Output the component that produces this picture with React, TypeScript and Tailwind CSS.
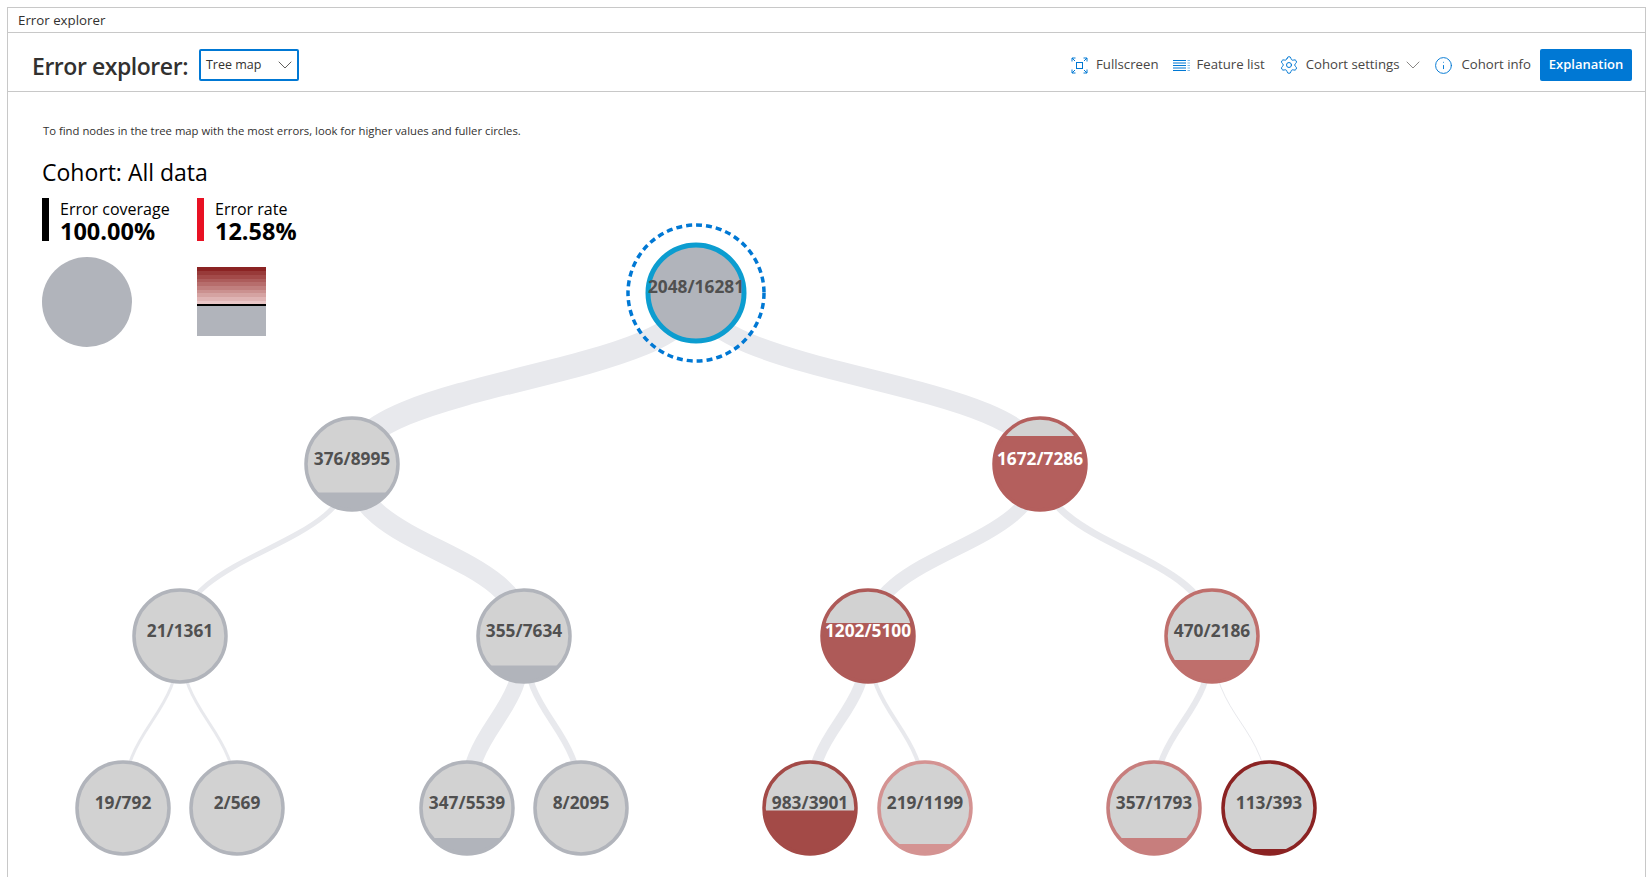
import type { ReactNode } from 'react'
import { ChevronDown, Info, Settings } from 'lucide-react'

const FONT = "'Open Sans', 'Noto Sans', sans-serif"

type TreeNode = {
  id: string
  x: number
  y: number
  label: string
  link: number
  fillTop: number
  fill: string
  textWhite?: boolean
  parent?: string
}

const GREY = '#b1b4bb'

const NODES: TreeNode[] = [
  { id: 'root', x: 696, y: 293, label: '2048/16281', link: 0, fillTop: 0, fill: GREY },
  { id: 'a', parent: 'root', x: 352, y: 464, label: '376/8995', link: 24, fillTop: 492.5, fill: GREY },
  { id: 'b', parent: 'root', x: 1040, y: 464, label: '1672/7286', link: 20, fillTop: 436, fill: '#b45f5d', textWhite: true },
  { id: 'aa', parent: 'a', x: 180, y: 636, label: '21/1361', link: 5, fillTop: 684, fill: GREY },
  { id: 'ab', parent: 'a', x: 524, y: 636, label: '355/7634', link: 21, fillTop: 665.5, fill: GREY },
  { id: 'ba', parent: 'b', x: 868, y: 636, label: '1202/5100', link: 14, fillTop: 623, fill: '#ae5a58', textWhite: true },
  { id: 'bb', parent: 'b', x: 1212, y: 636, label: '470/2186', link: 7, fillTop: 660, fill: '#bf6f6c' },
  { id: 'aaa', parent: 'aa', x: 123, y: 808, label: '19/792', link: 3, fillTop: 855, fill: GREY },
  { id: 'aab', parent: 'aa', x: 237, y: 808, label: '2/569', link: 3, fillTop: 856, fill: GREY },
  { id: 'aba', parent: 'ab', x: 467, y: 808, label: '347/5539', link: 16, fillTop: 838, fill: GREY },
  { id: 'abb', parent: 'ab', x: 581, y: 808, label: '8/2095', link: 6, fillTop: 855, fill: GREY },
  { id: 'baa', parent: 'ba', x: 810, y: 808, label: '983/3901', link: 11, fillTop: 810.5, fill: '#a34a47' },
  { id: 'bab', parent: 'ba', x: 925, y: 808, label: '219/1199', link: 4, fillTop: 844, fill: '#d49392' },
  { id: 'bba', parent: 'bb', x: 1154, y: 808, label: '357/1793', link: 6, fillTop: 838, fill: '#c77e7d' },
  { id: 'bbb', parent: 'bb', x: 1269, y: 808, label: '113/393', link: 1, fillTop: 849, fill: '#8b2323' },
]

const LEGEND_BANDS = ['#8b2323', '#983a39', '#a34a49', '#ad5c5b', '#b76d6c', '#c17f7e', '#cb9190', '#d5a3a2', '#dfb4b4', '#e9c6c6']

function linkPath(n: TreeNode) {
  const p = NODES.find((o) => o.id === n.parent)!
  const mid = (p.y + n.y) / 2
  return `M${p.x} ${p.y}C${p.x} ${mid} ${n.x} ${mid} ${n.x} ${n.y}`
}

function TreeChart() {
  return (
    <svg className="absolute left-0 top-0" width={1650} height={877} aria-label="Tree map">
      <defs>
        {NODES.map((n) => (
          <clipPath id={`clip-${n.id}`} key={n.id}>
            <circle cx={n.x} cy={n.y} r={46} />
          </clipPath>
        ))}
      </defs>
      {NODES.filter((n) => n.parent).map((n) => (
        <path key={n.id} d={linkPath(n)} fill="none" stroke="#e8e9ed" strokeWidth={n.link} />
      ))}
      <circle cx={696} cy={293} r={68} fill="none" stroke="#0078d4" strokeWidth={3.5} strokeDasharray="6 4" />
      {NODES.map((n) => {
        const isRoot = n.id === 'root'
        return (
          <g key={n.id}>
            <circle cx={n.x} cy={n.y} r={isRoot ? 48 : 46} fill={isRoot ? GREY : '#d2d2d2'} />
            {n.fillTop > 0 && (
              <rect x={n.x - 50} y={n.fillTop} width={100} height={80} fill={n.fill} clipPath={`url(#clip-${n.id})`} />
            )}
            <circle
              cx={n.x}
              cy={n.y}
              r={isRoot ? 48 : 46}
              fill="none"
              stroke={isRoot ? '#0c9dd0' : n.fill}
              strokeWidth={isRoot ? 5 : 3.5}
            />
            <text
              x={n.x}
              y={isRoot ? n.y : n.y + 1}
              textAnchor="middle"
              fontFamily={FONT}
              fontWeight={700}
              fontSize={17.3}
              fill={n.textWhite ? '#ffffff' : '#505050'}
            >
              {n.label}
            </text>
          </g>
        )
      })}
    </svg>
  )
}

function FullscreenIcon() {
  return (
    <svg width="17" height="17" viewBox="0 0 17 17" fill="none" stroke="#0078d4" strokeWidth="1">
      <rect x="5.5" y="5.5" width="6" height="6" />
      <path d="M1 4.5V1h3.5M1 1l3 3M16 4.5V1h-3.5M16 1l-3 3M1 12.5V16h3.5M1 16l3-3M16 12.5V16h-3.5M16 16l-3-3" />
    </svg>
  )
}

function FeatureListIcon() {
  return (
    <svg width="17" height="17" viewBox="0 0 17 17" fill="none" stroke="#0078d4" strokeWidth="1" className="-mr-[2px]">
      <path d="M0 3.5h13M0 6h13M0 8.5h13M0 11h13M0 13.5h13" />
      <path d="M14.5 3.5h2.5M14.5 6h2.5M14.5 8.5h2.5M14.5 11h2.5M14.5 13.5h2.5" strokeOpacity="0.5" />
    </svg>
  )
}

function ToolbarAction({ icon, label, after, className }: { icon: ReactNode; label: string; after?: ReactNode; className?: string }) {
  return (
    <button className={`flex h-8 items-center gap-2 text-[13.2px] text-[#484644] ${className ?? ''}`}>
      {icon}
      <span>{label}</span>
      {after}
    </button>
  )
}

function Metric({ label, value, bar, width }: { label: string; value: string; bar: string; width: string }) {
  return (
    <div className={`flex h-[43px] ${width}`}>
      <div className={`h-[43px] w-[7px] ${bar}`} />
      <div className="ml-[11px] pt-[1px]">
        <div className="text-base leading-[20px] text-black">{label}</div>
        <div className="mt-[1px] text-[23.5px] font-bold leading-[23px] text-black">{value}</div>
      </div>
    </div>
  )
}

export default function App() {
  return (
    <div className="relative h-[877px] w-[1650px] overflow-hidden bg-white" style={{ fontFamily: FONT }}>
      <div className="ml-[7px] mr-[4px] mt-[7px] h-[880px] border border-[#c8c8c8]">
        <div className="flex h-[25px] items-center border-b border-[#c8c8c8] pl-[10px] pt-[2px] text-[13.3px] text-[#323130]">
          Error explorer
        </div>
        <div className="flex h-[59px] items-center border-b border-[#c8c8c8] pl-[24px] pr-[13px] pt-[6px]">
          <h1 className="mt-[2px] text-[23px] font-semibold tracking-[-0.45px] text-[#323130]">Error explorer:</h1>
          <div className="ml-[11px] flex h-8 w-[100px] items-center justify-between rounded-[2px] border-2 border-[#0078d4] pl-[5px] text-[12.5px] text-[#323130]">
            Tree map
            <ChevronDown size={24} strokeWidth={1} className="text-[#605e5c]" />
          </div>
          <div className="ml-auto flex items-center gap-4">
            <ToolbarAction label="Fullscreen" icon={<FullscreenIcon />} className="-mr-[1px]" />
            <ToolbarAction label="Feature list" icon={<FeatureListIcon />} className="-mr-[2px]" />
            <ToolbarAction
              label="Cohort settings"
              icon={<Settings size={20} strokeWidth={1.2} className="-mr-[1px] text-[#0078d4]" />}
              after={<ChevronDown size={24} strokeWidth={1} className="-mx-[6px] text-[#8a8886]" />}
            />
            <ToolbarAction
              label="Cohort info"
              icon={<Info size={19} strokeWidth={1.2} className="text-[#0078d4]" />}
              className="-ml-[1px]"
            />
            <button className="ml-[-7px] h-8 w-[92px] rounded-[2px] bg-[#0078d4] text-[13px] font-semibold text-white">
              Explanation
            </button>
          </div>
        </div>
        <div className="pl-[34px] pt-[31px]">
          <p className="ml-[1px] text-[11.3px] text-[#323130]">
            To find nodes in the tree map with the most errors, look for higher values and fuller circles.
          </p>
          <h2 className="mt-[15px] text-[23px] text-black">Cohort: All data</h2>
          <div className="mt-[9px] flex">
            <Metric label="Error coverage" value="100.00%" bar="bg-black" width="w-[155px]" />
            <Metric label="Error rate" value="12.58%" bar="bg-[#e81123]" width="w-[150px]" />
          </div>
          <div className="mt-[16px] flex items-start">
            <div className="size-[90px] rounded-full bg-[#b1b4bb]" />
            <div className="ml-[65px] mt-[10px] w-[69px]">
              {LEGEND_BANDS.map((c) => (
                <div key={c} className="h-[3.7px]" style={{ backgroundColor: c }} />
              ))}
              <div className="h-[2px] bg-black" />
              <div className="h-[30px] bg-[#b1b4bb]" />
            </div>
          </div>
        </div>
      </div>
      <TreeChart />
    </div>
  )
}
